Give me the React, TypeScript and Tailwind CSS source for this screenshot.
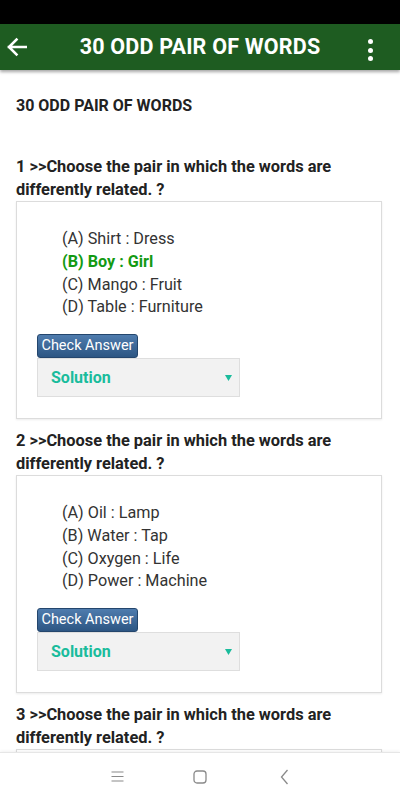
import React from "react";

const FONT = { fontFamily: "Roboto, 'Liberation Sans', Arial, sans-serif" };

function Question({ n, opts, correct }: { n: number; opts: string[]; correct?: number }) {
  return (
    <div className="mt-[10px]">
      <div className="text-[16.4px] leading-[23px] font-bold text-[#222]">
        {n} &gt;&gt;Choose the pair in which the words are differently related. ?
      </div>
      <div className="h-[218px] border border-[#dcdcdc] shadow-[0_1px_2px_rgba(0,0,0,0.08)] bg-white pt-[26px] px-[20px]">
        <div className="ml-[25px] text-[16.2px] leading-[22.75px] text-[#333]">
          {opts.map((o, i) => (
            <div key={i} className={i === correct ? "font-bold text-[#139a13]" : ""}>
              {o}
            </div>
          ))}
        </div>
        <div className="mt-[15px] flex flex-col items-start">
          <div className="h-[24px] w-[101px] rounded-[3px] border border-[#24466d] bg-gradient-to-b from-[#4f7cae] to-[#2d5683] text-white text-[14.5px] leading-[22px] flex items-center justify-center">
            Check Answer
          </div>
          <div className="h-[39px] w-[203px] border border-[#dedede] bg-[#f2f2f2] flex items-center justify-between pl-[13px] pr-[7px]">
            <span className="text-[16px] font-bold text-[#1abc9c]">Solution</span>
            <svg width="7" height="6" viewBox="0 0 7 6">
              <path d="M0 0 L7 0 L3.5 6 Z" fill="#1abc9c" />
            </svg>
          </div>
        </div>
      </div>
    </div>
  );
}

export default function App() {
  return (
    <div style={FONT} className="w-[400px] h-[800px] flex flex-col bg-white overflow-hidden">
      <div className="h-[24px] bg-black shrink-0" />
      <div className="relative h-[46px] bg-[#1e5c21] shrink-0 flex items-center shadow-[0_2px_3px_rgba(0,0,0,0.35)] z-10">
        <svg className="absolute left-[6px] top-[13px]" width="21" height="20" viewBox="0 0 21 20">
          <path d="M20 10 H3 M10.5 2.5 L3 10 L10.5 17.5" stroke="white" strokeWidth="2.6" fill="none" strokeLinecap="square" />
        </svg>
        <div className="w-full text-center text-white text-[21.5px] font-bold tracking-[0.2px]">30 ODD PAIR OF WORDS</div>
        <div className="absolute right-[27px] top-[15px] flex flex-col gap-[3.5px]">
          <div className="w-[5px] h-[5px] rounded-full bg-white" />
          <div className="w-[5px] h-[5px] rounded-full bg-white" />
          <div className="w-[5px] h-[5px] rounded-full bg-white" />
        </div>
      </div>
      <div className="flex-1 overflow-hidden pl-[16px] pr-[18px]">
        <div className="mt-[26px] text-[16px] leading-[20px] font-bold text-[#222]">30 ODD PAIR OF WORDS</div>
        <div className="mt-[39px]">
          <Question n={1} correct={1} opts={["(A) Shirt : Dress", "(B) Boy : Girl", "(C) Mango : Fruit", "(D) Table : Furniture"]} />
          <Question n={2} opts={["(A) Oil : Lamp", "(B) Water : Tap", "(C) Oxygen : Life", "(D) Power : Machine"]} />
          <Question n={3} opts={["(A) Pen : Write", "(B) Knife : Cut", "(C) Eye : See", "(D) Ear : Hear"]} />
        </div>
      </div>
      <div className="h-[48px] shrink-0 bg-white border-t border-[#e6e6e6] shadow-[0_-1px_3px_rgba(0,0,0,0.06)] relative">
        <svg className="absolute left-[111px] top-[18px]" width="13" height="11" viewBox="0 0 13 11">
          <path d="M0.5 1 H12.5 M0.5 5.5 H12.5 M0.5 10 H12.5" stroke="#8a8a8a" strokeWidth="1.1" fill="none" />
        </svg>
        <svg className="absolute left-[193px] top-[17px]" width="14" height="14" viewBox="0 0 14 14">
          <rect x="1" y="1" width="12" height="12" rx="3" stroke="#8a8a8a" strokeWidth="1.3" fill="none" />
        </svg>
        <svg className="absolute left-[280px] top-[16px]" width="9" height="16" viewBox="0 0 9 16">
          <path d="M7.5 1 L1.5 8 L7.5 15" stroke="#8a8a8a" strokeWidth="1.3" fill="none" />
        </svg>
      </div>
    </div>
  );
}
